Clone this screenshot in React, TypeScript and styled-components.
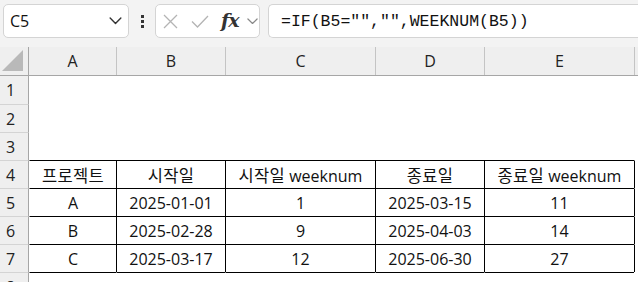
import React from "react";
import styled, { createGlobalStyle } from "styled-components";

const GlobalStyle = createGlobalStyle`
  html, body {
    margin: 0;
    padding: 0;
    background: #ffffff;
    overflow: hidden;
  }
  body {
    font-family: "Open Sans", "Noto Sans CJK KR", sans-serif;
  }
`;

// F only peeks in at the right edge, so its letter is never visible
const COLS = [
  { name: "A", width: 87 },
  { name: "B", width: 109 },
  { name: "C", width: 150 },
  { name: "D", width: 109 },
  { name: "E", width: 150 },
  { name: "", width: 80 },
];

const TABLE: string[][] = [
  ["프로젝트", "시작일", "시작일 weeknum", "종료일", "종료일 weeknum"],
  ["A", "2025-01-01", "1", "2025-03-15", "11"],
  ["B", "2025-02-28", "9", "2025-04-03", "14"],
  ["C", "2025-03-17", "12", "2025-06-30", "27"],
];

const ROW_COUNT = 8;
const TABLE_START = 4;

// hangul runs get their own span so they can be sized like Malgun Gothic
function CellText({ text }: { text: string }) {
  const parts = text.split(/([\uAC00-\uD7A3]+)/).filter((p) => p !== "");
  return (
    <CellInner>
      {parts.map((p, i) =>
        /[\uAC00-\uD7A3]/.test(p) ? <Kor key={i}>{p}</Kor> : <span key={i}>{p}</span>
      )}
    </CellInner>
  );
}

function Chevron({ size = 12, color = "#444" }: { size?: number; color?: string }) {
  return (
    <svg width={size} height={size / 2 + 1} viewBox="0 0 12 7" fill="none">
      <path d="M1 1l5 5 5-5" stroke={color} strokeWidth="1.3" strokeLinecap="round" strokeLinejoin="round" />
    </svg>
  );
}

export default function App() {
  return (
    <Page>
      <GlobalStyle />
      <FormulaBar>
        <NameBox>
          <NameText>C5</NameText>
          <Chevron size={13} color="#333" />
        </NameBox>
        <Dots>
          <i />
          <i />
          <i />
        </Dots>
        <IconBox>
          <svg width="15" height="15" viewBox="0 0 15 15">
            <path d="M1 1l13 13M14 1L1 14" stroke="#b4b4b4" strokeWidth="1.3" />
          </svg>
          <svg width="18" height="13" viewBox="0 0 18 13">
            <path d="M1 6.5l5.5 5.5L17 1" fill="none" stroke="#b4b4b4" strokeWidth="1.3" />
          </svg>
          <Fx>fx</Fx>
          <Chevron size={11} color="#888" />
        </IconBox>
        <FormulaBox>=IF(B5="","",WEEKNUM(B5))</FormulaBox>
      </FormulaBar>

      <Grid>
        <HeaderRow>
          <Corner>
            <svg width="22" height="22" viewBox="0 0 22 22">
              <polygon points="21,0 21,21 0,21" fill="#b9b9b9" />
            </svg>
          </Corner>
          {COLS.map((c, ci) => (
            <ColHeader key={ci} $w={c.width} $first={ci === 0}>
              {c.name}
            </ColHeader>
          ))}
        </HeaderRow>
        {Array.from({ length: ROW_COUNT }, (_, i) => {
          const rowNo = i + 1;
          const data = TABLE[rowNo - TABLE_START];
          const topLine = rowNo >= TABLE_START && rowNo <= TABLE_START + TABLE.length;
          return (
            <Row key={rowNo}>
              <RowHeader $first={rowNo === 1}>{rowNo}</RowHeader>
              {COLS.map((c, ci) => {
                const inTable = ci < 5;
                return (
                  <Cell
                    key={ci}
                    $w={c.width}
                    $top={topLine && inTable}
                    $left={!!data && ci > 0}
                  >
                    {data && inTable ? <CellText text={data[ci]} /> : null}
                  </Cell>
                );
              })}
            </Row>
          );
        })}
      </Grid>
    </Page>
  );
}

const Page = styled.div`
  width: 638px;
  height: 282px;
  overflow: hidden;
  background: #ffffff;
`;

const FormulaBar = styled.div`
  height: 47px;
  box-sizing: border-box;
  padding: 4px 0 0 3px;
  display: flex;
  align-items: flex-start;
  background: #f3f3f3;
`;

const Box = styled.div`
  height: 34px;
  box-sizing: border-box;
  background: #ffffff;
  border: 1px solid #d4d4d4;
  border-radius: 5px;
  display: flex;
  align-items: center;
`;

const NameBox = styled(Box)`
  width: 126px;
  padding: 0 6px 0 6px;
  justify-content: space-between;
`;

const NameText = styled.span`
  font-family: "Open Sans", sans-serif;
  font-size: 16px;
  color: #111;
`;

const Dots = styled.div`
  width: 26px;
  height: 34px;
  display: flex;
  flex-direction: column;
  align-items: center;
  justify-content: center;
  gap: 2px;
  i {
    display: block;
    width: 3px;
    height: 3px;
    background: #333;
  }
`;

const IconBox = styled(Box)`
  width: 105px;
  padding: 0 0 0 7px;
  svg:nth-child(1) {
    margin-right: 13px;
  }
  svg:nth-child(2) {
    margin-right: 12px;
  }
`;

const Fx = styled.span`
  font-family: "DejaVu Serif", "Liberation Serif", serif;
  font-style: italic;
  font-weight: bold;
  font-size: 19px;
  letter-spacing: -1px;
  color: #333;
  margin: -3px 8px 0 0;
`;

const FormulaBox = styled(Box)`
  margin-left: 8px;
  flex: 1;
  border-right: none;
  border-radius: 5px 0 0 5px;
  padding-left: 12px;
  font-family: "Liberation Mono", monospace;
  font-size: 16.5px;
  color: #111;
  white-space: nowrap;
  overflow: hidden;
`;

const Grid = styled.div`
  display: flex;
  flex-direction: column;
`;

const HeaderRow = styled.div`
  display: flex;
  height: 28px;
  background: #efefef;
  border-bottom: 1px solid #a6a6a6;
`;

const Corner = styled.div`
  width: 29px;
  flex: 0 0 29px;
  box-sizing: border-box;
  border-right: 1px solid #a6a6a6;
  display: flex;
  align-items: flex-end;
  justify-content: flex-end;
  padding: 0 4px 3px 0;
`;

const ColHeader = styled.div<{ $w: number; $first: boolean }>`
  flex: 0 0 ${(p) => p.$w}px;
  box-sizing: border-box;
  border-left: ${(p) => (p.$first ? "none" : "1px solid #c4c4c4")};
  display: flex;
  align-items: center;
  justify-content: center;
  font-size: 16px;
  color: #222;
  overflow: hidden;
`;

const Row = styled.div`
  display: flex;
  height: 28px;
`;

const RowHeader = styled.div<{ $first: boolean }>`
  width: 29px;
  flex: 0 0 29px;
  box-sizing: border-box;
  background: #efefef;
  border-right: 1px solid #a6a6a6;
  border-top: ${(p) => (p.$first ? "none" : "1px solid #d4d4d4")};
  padding-left: 6px;
  display: flex;
  align-items: center;
  font-size: 16px;
  color: #222;
`;

const Cell = styled.div<{ $w: number; $top: boolean; $left: boolean }>`
  flex: 0 0 ${(p) => p.$w}px;
  box-sizing: border-box;
  border-top: 1px solid ${(p) => (p.$top ? "#000" : "transparent")};
  border-left: 1px solid ${(p) => (p.$left ? "#000" : "transparent")};
  display: flex;
  align-items: center;
  justify-content: center;
  font-family: "Open Sans", "Noto Sans CJK KR", sans-serif;
  font-size: 16px;
  color: #111;
`;

const CellInner = styled.span`
  white-space: pre;
`;

const Kor = styled.span`
  font-family: "Noto Sans CJK KR", sans-serif;
  font-size: 16.5px;
  letter-spacing: 0.3px;
`;
